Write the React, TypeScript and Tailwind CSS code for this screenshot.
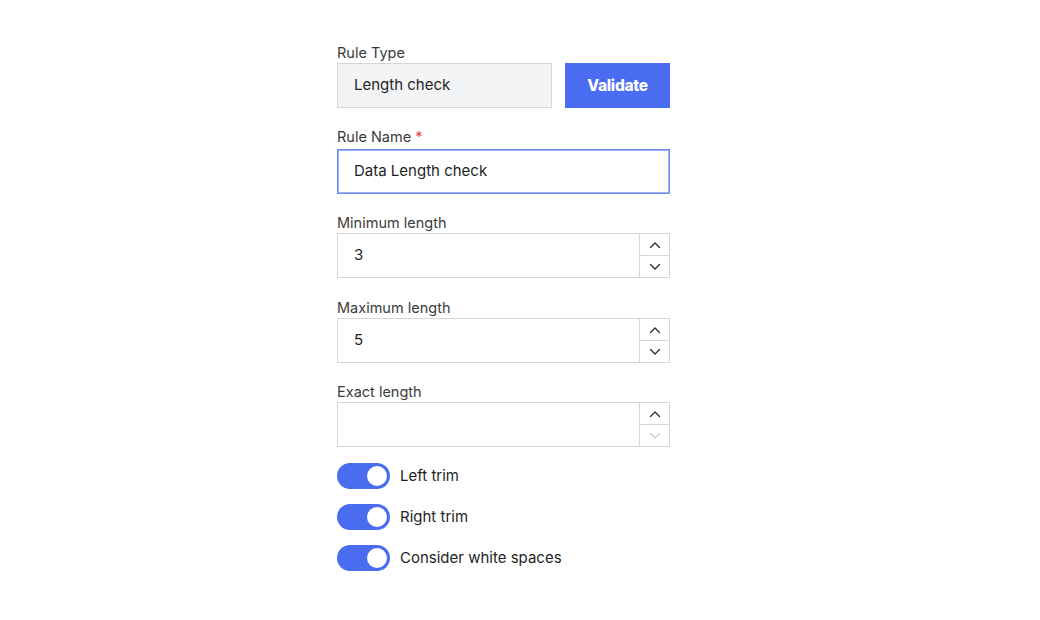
import React from "react";

const font = { fontFamily: "Inter, 'Noto Sans', sans-serif" };

const Chevron = ({ up, muted }: { up?: boolean; muted?: boolean }) => (
  <svg width="12" height="8" viewBox="0 0 12 8" fill="none">
    <path
      d={up ? "M1.5 6.5L6 2L10.5 6.5" : "M1.5 1.5L6 6L10.5 1.5"}
      stroke={muted ? "#c9ccd1" : "#2b2b2b"}
      strokeWidth="1.3"
      strokeLinecap="round"
      strokeLinejoin="round"
    />
  </svg>
);

const NumberField = ({ label, value, downMuted }: { label: string; value: string; downMuted?: boolean }) => (
  <div className="flex flex-col">
    <label className="text-[14.5px] leading-5 pt-px text-[#3b3b3b]">{label}</label>
    <div className="flex h-[45px] w-[333px] border border-[#d4d6da] bg-white">
      <div className="flex-1 flex items-center pl-4 text-[15px] text-[#1f1f1f]">{value}</div>
      <div className="w-[30px] flex flex-col border-l border-[#d4d6da]">
        <div className="flex-1 flex items-center justify-center border-b border-[#d4d6da]">
          <Chevron up />
        </div>
        <div className="flex-1 flex items-center justify-center">
          <Chevron muted={downMuted} />
        </div>
      </div>
    </div>
  </div>
);

const Toggle = ({ label }: { label: string }) => (
  <div className="flex items-center gap-[10px]">
    <div className="relative w-[53px] h-[26px] rounded-full bg-[#4a6cf0]">
      <div className="absolute right-[3px] top-[3px] w-5 h-5 rounded-full bg-white" />
    </div>
    <span className="text-[15px] text-[#1f1f1f]">{label}</span>
  </div>
);

export default function App() {
  return (
    <div className="min-h-[620px] w-[1040px] bg-white pl-[337px] pt-[42px]" style={font}>
      <div className="flex flex-col w-[333px]">
        <label className="text-[14.5px] leading-5 pt-px text-[#3b3b3b]">Rule Type</label>
        <div className="flex gap-[13px]">
          <div className="w-[215px] h-[45px] flex items-center pl-4 bg-[#f3f4f6] border border-[#d4d6da] text-[15px] text-[#1f1f1f]">
            Length check
          </div>
          <button className="w-[105px] h-[45px] bg-[#4a6cf0] text-white text-[15.5px] font-extrabold tracking-[-0.3px]">
            Validate
          </button>
        </div>

        <label className="mt-[18px] pt-px text-[14.5px] leading-5 text-[#3b3b3b] mb-[2px]">
          Rule Name <span className="text-[#e5484d]">*</span>
        </label>
        <div className="h-[45px] w-[333px] flex items-center pl-4 border border-[#6f8aec] bg-white shadow-[inset_0_0_0_1px_#9db0f2]">
          <span className="text-[15px] text-[#1f1f1f]">Data Length check</span>
        </div>

        <div className="mt-[18px]">
          <NumberField label="Minimum length" value="3" />
        </div>
        <div className="mt-[19px]">
          <NumberField label="Maximum length" value="5" />
        </div>
        <div className="mt-[18px]">
          <NumberField label="Exact length" value="" downMuted />
        </div>

        <div className="mt-4 flex flex-col gap-[15px]">
          <Toggle label="Left trim" />
          <Toggle label="Right trim" />
          <Toggle label="Consider white spaces" />
        </div>
      </div>
    </div>
  );
}
